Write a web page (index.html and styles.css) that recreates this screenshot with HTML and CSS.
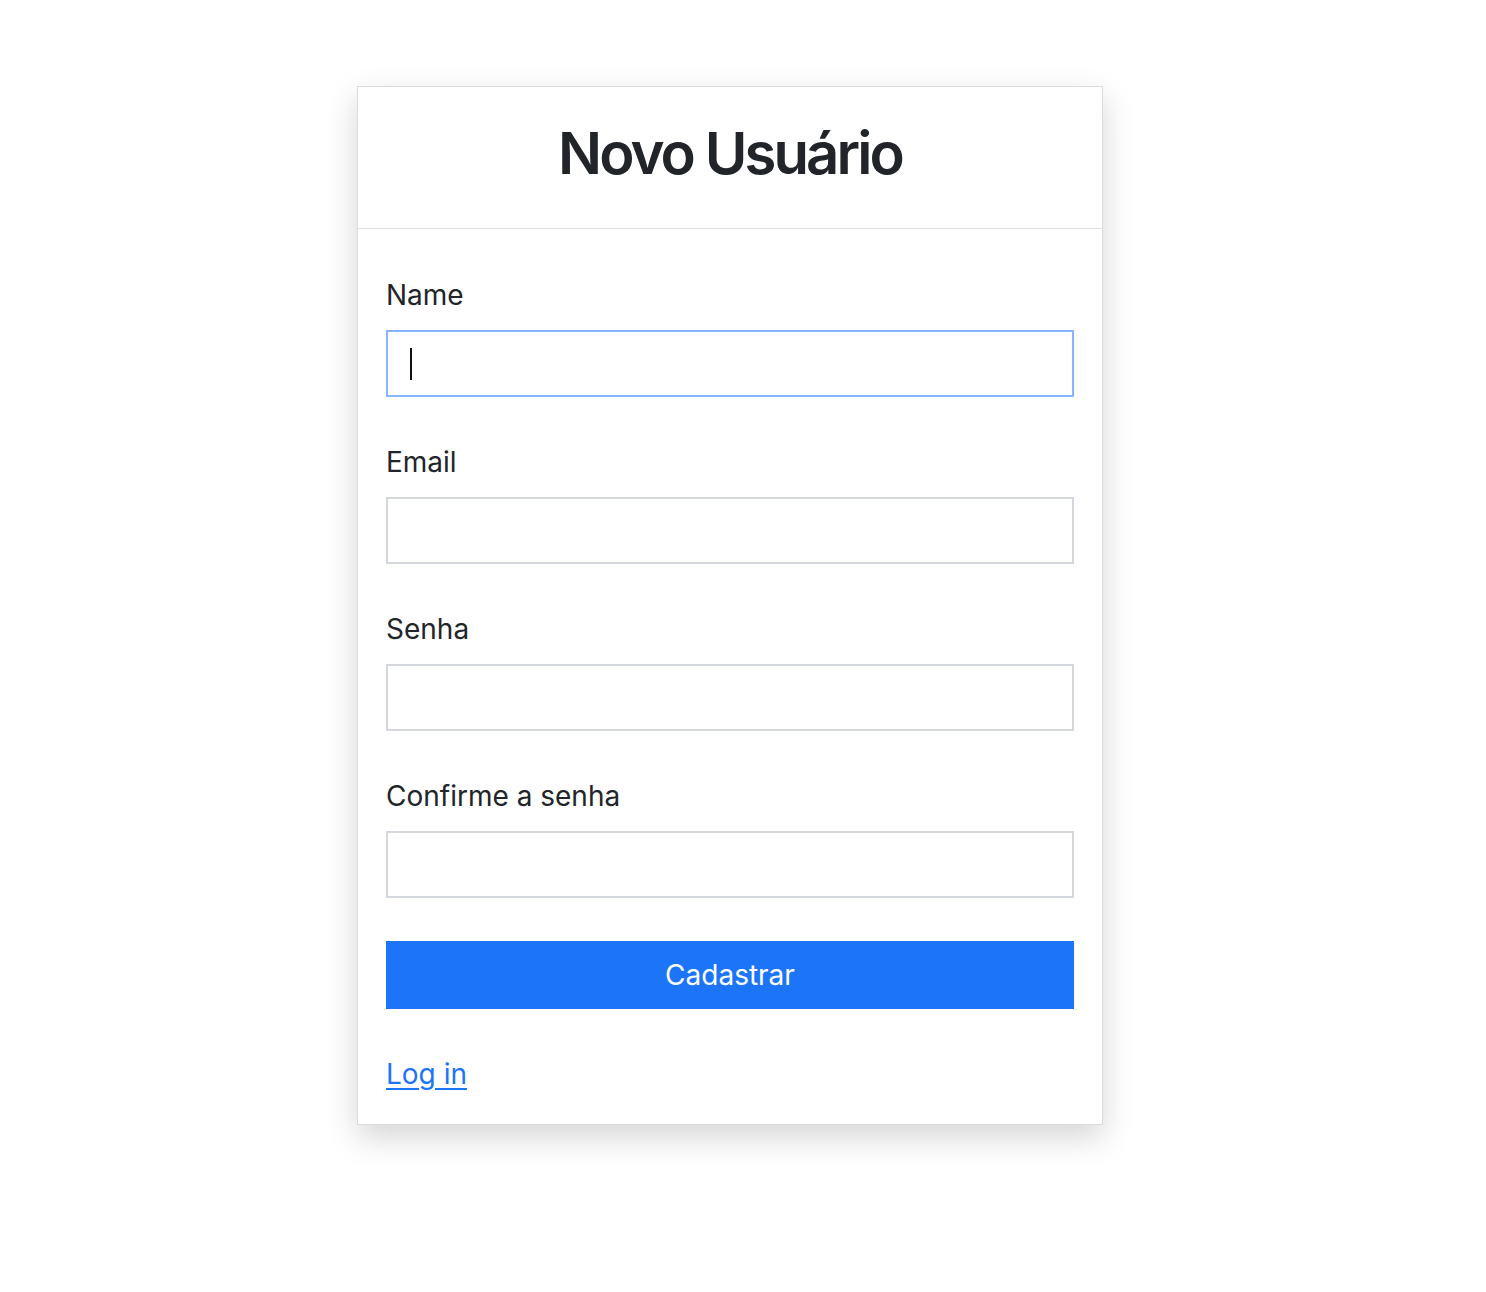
FILE: index.html
```html
<!DOCTYPE html>
<html lang="pt">
<head>
<meta charset="utf-8">
<title>Novo Usuário</title>
<link rel="stylesheet" href="styles.css">
</head>
<body>
<div class="page">
  <div class="card">
    <div class="card-header">
      <h1 class="title">Novo Usuário</h1>
    </div>
    <form class="card-body">
      <div class="field">
        <label class="label" for="name">Name</label>
        <div class="input input-focus" id="name"><span class="caret"></span></div>
      </div>
      <div class="field">
        <label class="label" for="email">Email</label>
        <div class="input" id="email"></div>
      </div>
      <div class="field">
        <label class="label" for="senha">Senha</label>
        <div class="input" id="senha"></div>
      </div>
      <div class="field">
        <label class="label" for="confirm">Confirme a senha</label>
        <div class="input" id="confirm"></div>
      </div>
      <button type="button" class="btn">Cadastrar</button>
      <a class="link" href="#">Log in</a>
    </form>
  </div>
</div>
</body>
</html>
```
FILE: styles.css
```css
html, body {
  margin: 0;
  padding: 0;
  background: #ffffff;
}
body {
  font-family: Inter, "Liberation Sans", sans-serif;
  color: #212529;
  min-height: 1292px;
}
.page {
  padding: 86px 0 0 357px;
}
.card {
  width: 744px;
  border: 1px solid #dcdcdc;
  background: #fff;
  box-shadow: 0 12px 30px rgba(0, 0, 0, 0.17);
}
.card-header {
  border-bottom: 1px solid #dfe1e3;
  height: 141px;
  display: flex;
  align-items: center;
  justify-content: center;
}
.title {
  margin: 0 0 8px 0;
  font-size: 58px;
  font-weight: 600;
  line-height: 1.2;
  letter-spacing: -2.9px;
}
.card-body {
  display: flex;
  flex-direction: column;
  padding: 45px 28px 29px;
}
.field {
  display: flex;
  flex-direction: column;
  margin-bottom: 44px;
}
.field:nth-last-of-type(1) {
  margin-bottom: 43px;
}
.label {
  font-size: 28px;
  line-height: 42px;
  margin-bottom: 14px;
}
.input {
  height: 63px;
  border: 2px solid #d4d8de;
  background: #fff;
  display: flex;
  align-items: center;
  padding-left: 22px;
}
.input-focus {
  border-color: #86b7fe;
}
.caret {
  width: 2px;
  height: 32px;
  background: #111;
}
.btn {
  height: 68px;
  border: none;
  background: #1c75f9;
  color: #fff;
  font-family: inherit;
  font-size: 28px;
  padding: 0;
  margin-bottom: 44px;
}
.link {
  align-self: flex-start;
  font-size: 28px;
  line-height: 42px;
  color: #1c75f9;
  text-decoration: underline;
  text-underline-offset: 4px;
}
```
